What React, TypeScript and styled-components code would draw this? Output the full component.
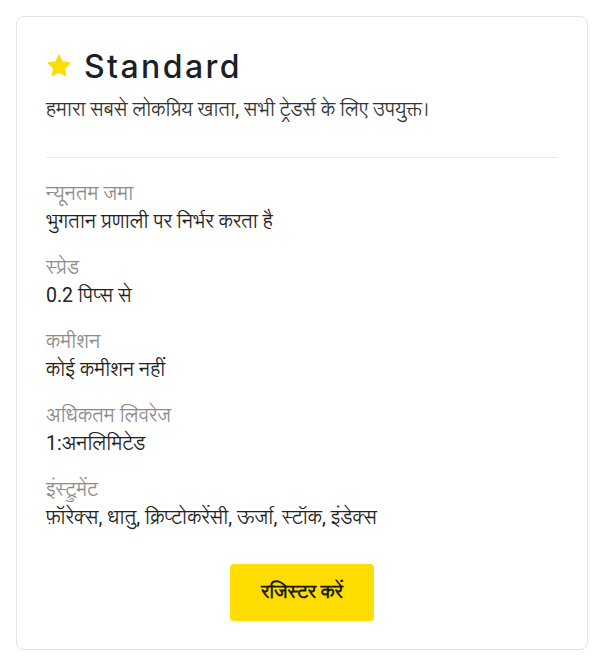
import React from "react";
import styled, { createGlobalStyle } from "styled-components";

const Global = createGlobalStyle`
  html, body { margin: 0; padding: 0; background: #fff; }
  body { font-family: Roboto, "Lohit Devanagari", "Noto Sans Devanagari", sans-serif; color: #222; }
`;

const Page = styled.div`
  padding: 16px 17px 15px 16px;
`;

const Card = styled.div`
  border: 1px solid #e3e3e3;
  border-radius: 8px;
  padding: 29px 29px 28px 29px;
  background: #fff;
`;

const TitleRow = styled.div`
  display: flex;
  align-items: center;
  gap: 12px;
  height: 40px;
`;

const Title = styled.h2`
  margin: 0;
  font-family: "Inter", "Lato", sans-serif;
  font-weight: 500;
  font-size: 32px;
  color: #1c1f24;
  letter-spacing: 2.4px;
`;

const Desc = styled.p`
  margin: 10px 0 0;
  font-size: 19.5px;
  line-height: 28px;
  color: #333;
`;

const Divider = styled.hr`
  border: 0;
  border-top: 1px solid #e4e4e4;
  margin: 33px 0 22px;
`;

const List = styled.div`
  display: flex;
  flex-direction: column;
  gap: 18px;
`;

const Item = styled.div`
  display: flex;
  flex-direction: column;
`;

const Label = styled.div`
  font-size: 19.5px;
  line-height: 28px;
  color: #8c8c8c;
`;

const Value = styled.div`
  font-size: 19.5px;
  line-height: 28px;
  color: #222;
`;

const Actions = styled.div`
  display: flex;
  justify-content: center;
  margin-top: 32px;
`;

const Button = styled.button`
  background: #ffdd00;
  border: 0;
  border-radius: 4px;
  width: 144px;
  height: 57px;
  font-family: inherit;
  font-size: 19px;
  font-weight: 700;
  color: #1a1a1a;
  cursor: pointer;
`;

const Star = () => (
  <svg width="26" height="26" viewBox="0 0 24 24">
    <path
      d="M12 2.2l2.95 6.2 6.8.86-4.98 4.72 1.28 6.74L12 17.45 5.95 20.72l1.28-6.74L2.25 9.26l6.8-.86z"
      fill="#ffdd00"
      stroke="#ffdd00"
      strokeWidth="1.4"
      strokeLinejoin="round"
    />
  </svg>
);

const rows = [
  ["न्यूनतम जमा", "भुगतान प्रणाली पर निर्भर करता है"],
  ["स्प्रेड", "0.2 पिप्स से"],
  ["कमीशन", "कोई कमीशन नहीं"],
  ["अधिकतम लिवरेज", "1:अनलिमिटेड"],
  ["इंस्ट्रुमेंट", "फ़ॉरेक्स, धातु, क्रिप्टोकरेंसी, ऊर्जा, स्टॉक, इंडेक्स"],
];

export default function App() {
  return (
    <>
      <Global />
      <Page>
        <Card>
          <TitleRow>
            <Star />
            <Title>Standard</Title>
          </TitleRow>
          <Desc>हमारा सबसे लोकप्रिय खाता, सभी ट्रेडर्स के लिए उपयुक्त।</Desc>
          <Divider />
          <List>
            {rows.map(([l, v]) => (
              <Item key={l}>
                <Label>{l}</Label>
                <Value>{v}</Value>
              </Item>
            ))}
          </List>
          <Actions>
            <Button>रजिस्टर करें</Button>
          </Actions>
        </Card>
      </Page>
    </>
  );
}
